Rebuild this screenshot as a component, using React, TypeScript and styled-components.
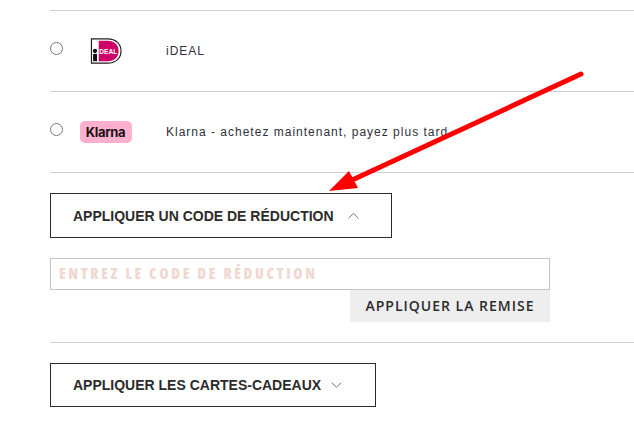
import React from 'react'
import styled, { createGlobalStyle } from 'styled-components'

const GlobalStyle = createGlobalStyle`
  html, body {
    margin: 0;
    padding: 0;
    background: #fff;
    overflow: hidden;
  }
`

const Page = styled.div`
  position: relative;
  width: 634px;
  height: 445px;
  overflow: hidden;
  box-sizing: border-box;
  padding: 10px 0 0 50px;
  font-family: "Liberation Sans", Arial, sans-serif;
  color: #2b2b2b;
`

const PaymentRow = styled.label`
  display: flex;
  align-items: center;
  height: 80px;
  border-top: 1px solid #cfcfcf;
`

const Radio = styled.input.attrs({ type: 'radio', name: 'payment' })`
  width: 13px;
  height: 13px;
  margin: 0 0 5px;
  flex: none;
`

const LogoSlot = styled.div`
  width: 103px;
  flex: none;
  display: flex;
  justify-content: center;
  padding-right: 18px;
  box-sizing: border-box;
`

const KlarnaBadge = styled.span`
  display: flex;
  align-items: center;
  justify-content: center;
  width: 52px;
  height: 22px;
  border-radius: 5px;
  background: #ffb0cf;
  color: #17120f;
  font-family: Inter, sans-serif;
  font-size: 13px;
  font-weight: 700;
  letter-spacing: -0.35px;
`

const MethodName = styled.span`
  font-size: 12px;
  letter-spacing: 1px;
  color: #2f2f3a;
`

const Section = styled.section<{ $open?: boolean }>`
  border-top: 1px solid #cfcfcf;
  padding: 20px 0 ${p => (p.$open ? '20px' : '0')};
`

const ToggleButton = styled.button<{ $width: number; $height: number }>`
  display: flex;
  align-items: center;
  width: ${p => p.$width}px;
  height: ${p => p.$height}px;
  box-sizing: border-box;
  padding: 0 0 0 22px;
  border: 1px solid #2b2b2b;
  background: #fff;
  color: #2b2b2b;
  font-family: "Liberation Sans", Arial, sans-serif;
  font-size: 14px;
  font-weight: 700;
  white-space: nowrap;
`

const Chevron = styled.svg<{ $gap: number }>`
  margin-left: ${p => p.$gap}px;
  flex: none;
`

const CodeForm = styled.form`
  width: 500px;
  margin-top: 20px;
  display: flex;
  flex-direction: column;
  align-items: flex-end;
`

const CodeInput = styled.input`
  width: 100%;
  height: 32px;
  box-sizing: border-box;
  padding: 0 8px 2px;
  border: 1px solid #c4c4c4;
  outline: none;
  font-family: "Open Sans", sans-serif;
  font-stretch: 75%;
  font-size: 15px;
  font-weight: 800;
  letter-spacing: 2.65px;

  &::placeholder {
    color: #f0d8d0;
    opacity: 1;
  }
`

const ApplyButton = styled.button`
  width: 200px;
  height: 32px;
  padding: 0 0 1px;
  border: 0;
  background: #eeeeee;
  color: #2b2b2b;
  font-family: "Open Sans", sans-serif;
  font-size: 14px;
  font-weight: 600;
  letter-spacing: 1px;
  white-space: nowrap;
`

const Arrow = styled.svg`
  position: absolute;
  left: 0;
  top: 0;
  pointer-events: none;
`

const IdealLogo = () => (
  <svg width="32" height="28" viewBox="0 0 33 28">
    <path d="M1.5 1.5H18C27 1.5 32 7 32 14S27 26.5 18 26.5H1.5Z" fill="#fff" stroke="#1c1c1c" strokeWidth="1.2" />
    <path d="M9 3.5H18C25.5 3.5 29.5 8 29.5 14S25.5 24.5 18 24.5H9Z" fill="#cc0066" />
    <circle cx="5.2" cy="14" r="2.2" fill="#111" />
    <rect x="3.2" y="17" width="4" height="7.5" fill="#111" />
    <text x="9.6" y="16.6" fontFamily="Liberation Sans, sans-serif" fontSize="6.8" fontWeight="700" fill="#fff">DEAL</text>
  </svg>
)

export default function App() {
  return (
    <Page>
      <GlobalStyle />
      <PaymentRow>
        <Radio />
        <LogoSlot>
          <IdealLogo />
        </LogoSlot>
        <MethodName>iDEAL</MethodName>
      </PaymentRow>
      <PaymentRow>
        <Radio />
        <LogoSlot>
          <KlarnaBadge>Klarna</KlarnaBadge>
        </LogoSlot>
        <MethodName>Klarna - achetez maintenant, payez plus tard</MethodName>
      </PaymentRow>
      <Section $open>
        <ToggleButton type="button" $width={342} $height={45}>
          APPLIQUER UN CODE DE RÉDUCTION
          <Chevron $gap={14} width="11" height="7" viewBox="0 0 11 7" fill="none" stroke="#6f7a78" strokeWidth="1">
            <path d="M.6 6.5L5.5 1.2L10.4 6.5" />
          </Chevron>
        </ToggleButton>
        <CodeForm>
          <CodeInput placeholder="ENTREZ LE CODE DE RÉDUCTION" />
          <ApplyButton type="button">APPLIQUER LA REMISE</ApplyButton>
        </CodeForm>
      </Section>
      <Section>
        <ToggleButton type="button" $width={326} $height={44}>
          APPLIQUER LES CARTES-CADEAUX
          <Chevron $gap={10} width="11" height="6" viewBox="0 0 11 6" fill="none" stroke="#6f7a78" strokeWidth="1">
            <path d="M.6 .6L5.5 5.2L10.4 .6" />
          </Chevron>
        </ToggleButton>
      </Section>
      <Arrow width="634" height="445" viewBox="0 0 634 445">
        <path d="M581 74L350 181" stroke="#ff0000" strokeWidth="5" strokeLinecap="round" fill="none" />
        <path d="M349 171L358 188L329 191Z" fill="#ff0000" />
      </Arrow>
    </Page>
  )
}
